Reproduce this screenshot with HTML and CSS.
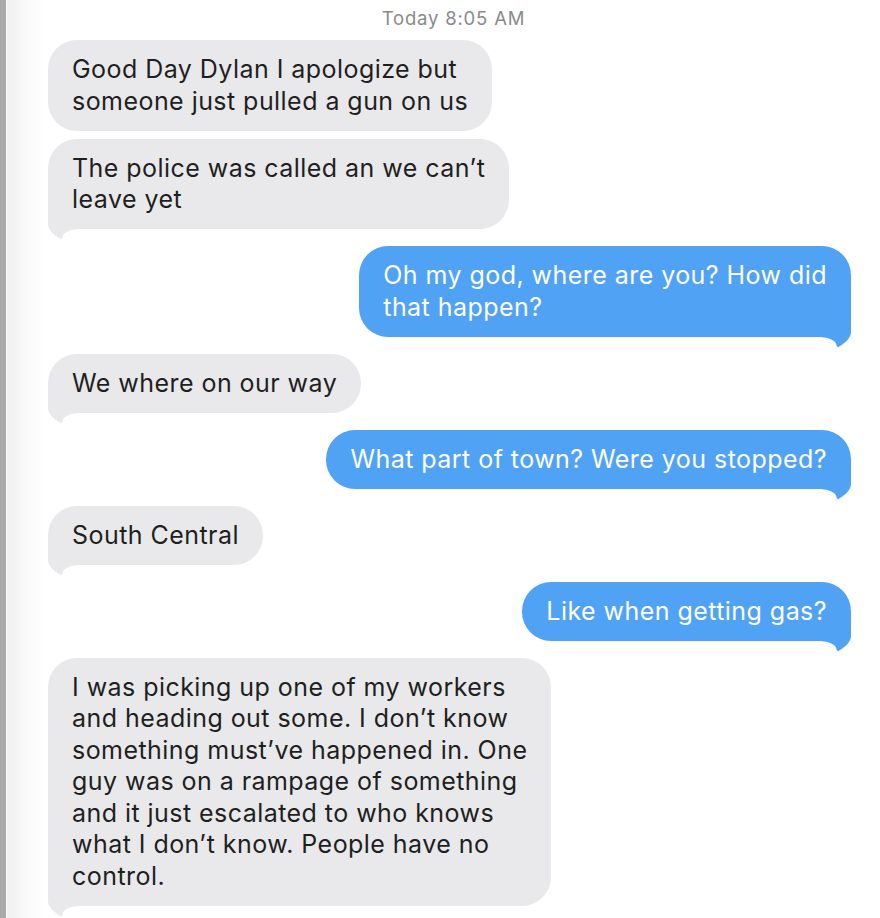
FILE: index.html
```html
<!DOCTYPE html>
<html lang="en">
<head>
<meta charset="utf-8">
<title>Messages</title>
<link rel="stylesheet" href="styles.css">
</head>
<body>
<div class="chat">
  <div class="stamp">Today 8:05 AM</div>

  <div class="msg in">Good Day Dylan I apologize but<br>someone just pulled a gun on us</div>
  <div class="msg in tail group-end">The police was called an we can’t<br>leave yet
    <svg class="tl" viewBox="0 0 40 40"><path d="M0 0 V24 C0 30 6 35 12 38.8 Q14.5 39.8 14.5 37 C15 33 20 30 30 29 H34 V0 Z"/></svg>
  </div>

  <div class="msg out tail group-end">Oh my god, where are you? How did<br>that happen?
    <svg class="tr" viewBox="0 0 40 40"><path d="M40 0 V24 C40 30 34 35 28 38.8 Q25.5 39.8 25.5 37 C25 33 20 30 10 29 H6 V0 Z"/></svg>
  </div>

  <div class="msg in tail group-end">We where on our way
    <svg class="tl" viewBox="0 0 40 40"><path d="M0 0 V24 C0 30 6 35 12 38.8 Q14.5 39.8 14.5 37 C15 33 20 30 30 29 H34 V0 Z"/></svg>
  </div>

  <div class="msg out tail group-end">What part of town? Were you stopped?
    <svg class="tr" viewBox="0 0 40 40"><path d="M40 0 V24 C40 30 34 35 28 38.8 Q25.5 39.8 25.5 37 C25 33 20 30 10 29 H6 V0 Z"/></svg>
  </div>

  <div class="msg in tail group-end">South Central
    <svg class="tl" viewBox="0 0 40 40"><path d="M0 0 V24 C0 30 6 35 12 38.8 Q14.5 39.8 14.5 37 C15 33 20 30 30 29 H34 V0 Z"/></svg>
  </div>

  <div class="msg out tail group-end">Like when getting gas?
    <svg class="tr" viewBox="0 0 40 40"><path d="M40 0 V24 C40 30 34 35 28 38.8 Q25.5 39.8 25.5 37 C25 33 20 30 10 29 H6 V0 Z"/></svg>
  </div>

  <div class="msg in tail">I was picking up one of my workers<br>and heading out some. I don’t know<br>something must’ve happened in. One<br>guy was on a rampage of something<br>and it just escalated to who knows<br>what I don’t know. People have no<br>control.
    <svg class="tl" viewBox="0 0 40 40"><path d="M0 0 V24 C0 30 6 35 12 38.8 Q14.5 39.8 14.5 37 C15 33 20 30 30 29 H34 V0 Z"/></svg>
  </div>
</div>
</body>
</html>
```

FILE: styles.css
```css
html, body {
  margin: 0;
  padding: 0;
  height: 100%;
  overflow: hidden;
}

body {
  background: linear-gradient(to right, #a9a9a9 0, #a9a9a9 6px, #ffffff 6px, #ffffff 7px, #efefef 7px, #fbfbfb 30px, #ffffff 46px);
  font-family: Inter, "Noto Sans", "Liberation Sans", sans-serif;
}

.chat {
  display: flex;
  flex-direction: column;
  gap: 8px;
  padding: 0 29px 0 48px;
}

.stamp {
  align-self: center;
  height: 32px;
  line-height: 36px;
  font-size: 18.5px;
  letter-spacing: 0.8px;
  color: #8a8a8a;
  padding-left: 8px;
}

.msg {
  position: relative;
  z-index: 0;
  font-size: 25px;
  line-height: 31.5px;
  padding: 14px 24px 13.5px;
  border-radius: 29px;
  letter-spacing: 0.45px;
}

.msg.in {
  align-self: flex-start;
  background: #e9e9eb;
  color: #1f1f1f;
}

.msg.out {
  align-self: flex-end;
  background: #50a2f5;
  color: #ffffff;
}

.msg.group-end {
  margin-bottom: 9px;
}

.msg svg {
  position: absolute;
  z-index: -1;
  bottom: -11px;
  width: 40px;
  height: 40px;
}

.msg svg.tl {
  left: 0;
}

.msg svg.tr {
  right: 0;
}

.msg.in svg path {
  fill: #e9e9eb;
}

.msg.out svg path {
  fill: #50a2f5;
}
```
